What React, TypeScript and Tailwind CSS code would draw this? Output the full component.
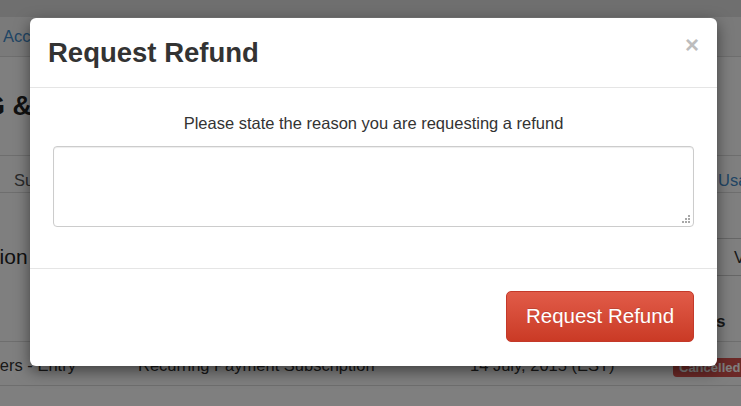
const FONT = "font-['Liberation_Sans',Arial,Helvetica,sans-serif]"

function Grip() {
  // textarea resize dots, bottom-right corner
  return (
    <svg className="absolute right-[3px] bottom-[3px]" width="10" height="10" viewBox="0 0 10 10">
      {[
        [7, 1],
        [4, 4], [7, 4],
        [1, 7], [4, 7], [7, 7],
      ].map(([x, y]) => (
        <rect key={`${x}-${y}`} x={x} y={y} width="2" height="2" fill="#a8a8a8" />
      ))}
    </svg>
  )
}

function Page() {
  return (
    <div className="flex flex-col">
      <div className="h-[17px] bg-[#dedede]" />
      <div className="h-[40px] bg-[#f5f5f5] border-b border-[#dddddd] flex items-center pl-[3px] text-[16.5px] text-[#428bca]">
        Account
      </div>
      <div className="h-[98px] flex items-center whitespace-nowrap">
        <h1 className="ml-[-103px] text-[27px] font-bold text-[#222]">BILLING &amp; SUBSCRIPTIONS</h1>
      </div>
      <div className="h-[38px] border-t border-b border-[#dddddd] grid grid-cols-[704px_1fr] pt-[14px] text-[16.5px] leading-[20px] whitespace-nowrap">
        <span className="pl-[14px] text-[#555]">Subscriptions</span>
        <span className="pl-[14px] text-[#428bca]">Usage</span>
      </div>
      <div className="mt-[45px] h-[38px] flex items-center justify-between whitespace-nowrap">
        <h2 className="ml-[-88px] text-[21px] text-[#222]">Subscription</h2>
        <div className="h-[38px] w-[40px] overflow-hidden border-t border-b border-l border-[#cccccc] rounded-l-[4px] flex items-center pl-[32px] text-[16.5px] text-[#333]">
          View
        </div>
      </div>
      <div className="mt-[26px] h-[40px] border-b border-[#dddddd] grid grid-cols-[138px_332px_203px_1fr] items-center text-[16.5px] font-bold text-[#333] whitespace-nowrap">
        <span />
        <span />
        <span />
        <span className="pl-[2px]">Status</span>
      </div>
      <div className="h-[44px] border-b border-[#dddddd] grid grid-cols-[138px_332px_203px_1fr] items-center text-[16.5px] text-[#333] whitespace-nowrap">
        <span className="ml-[-46px] mt-[3px]">Members - Entry</span>
        <span className="mt-[3px]">Recurring Payment Subscription</span>
        <span className="mt-[3px]">14 July, 2015 (EST)</span>
        <span className="mt-[6px]">
          <span className="inline-block h-[19px] rounded-[4px] bg-[#d9534f] px-[6px] text-[13px] leading-[19px] font-bold text-white">
            Cancelled
          </span>
        </span>
      </div>
    </div>
  )
}

export default function App() {
  return (
    <div className={`relative w-[741px] h-[406px] overflow-hidden bg-white ${FONT}`}>
      <Page />

      {/* backdrop */}
      <div className="absolute inset-0 bg-black/50" />

      {/* modal */}
      <div className="absolute left-[30px] top-[18px] w-[687px] rounded-[6px] bg-white shadow-[0_5px_15px_rgba(0,0,0,0.5)] flex flex-col text-[#333]">
        <div className="h-[70px] border-b border-[#e5e5e5] px-[18px] flex items-center justify-between">
          <h3 className="text-[27.5px] leading-[30px] font-bold text-[#333]">Request Refund</h3>
          <span className="mb-[15px] text-[24px] leading-none font-bold text-[#bdbdbd]">×</span>
        </div>

        <div className="h-[180px] px-[23px] pt-[25px] flex flex-col">
          <p className="text-center text-[16.5px] leading-[20px] text-[#333]">
            Please state the reason you are requesting a refund
          </p>
          <div className="relative mt-[13px]">
            <textarea className="block w-full h-[81px] resize-none rounded-[4px] border border-[#cccccc] bg-white shadow-[inset_0_1px_1px_rgba(0,0,0,0.075)] outline-none" />
            <Grip />
          </div>
        </div>

        <div className="border-t border-[#e5e5e5] px-[23px] pt-[22px] pb-[24px] flex justify-end">
          <button className="w-[188px] h-[51px] rounded-[5px] border border-[#c4392a] bg-gradient-to-b from-[#e15b48] to-[#ca3a25] text-white text-[20.5px] leading-none [text-shadow:0_-1px_0_rgba(0,0,0,0.15)]">
            Request Refund
          </button>
        </div>
      </div>
    </div>
  )
}
